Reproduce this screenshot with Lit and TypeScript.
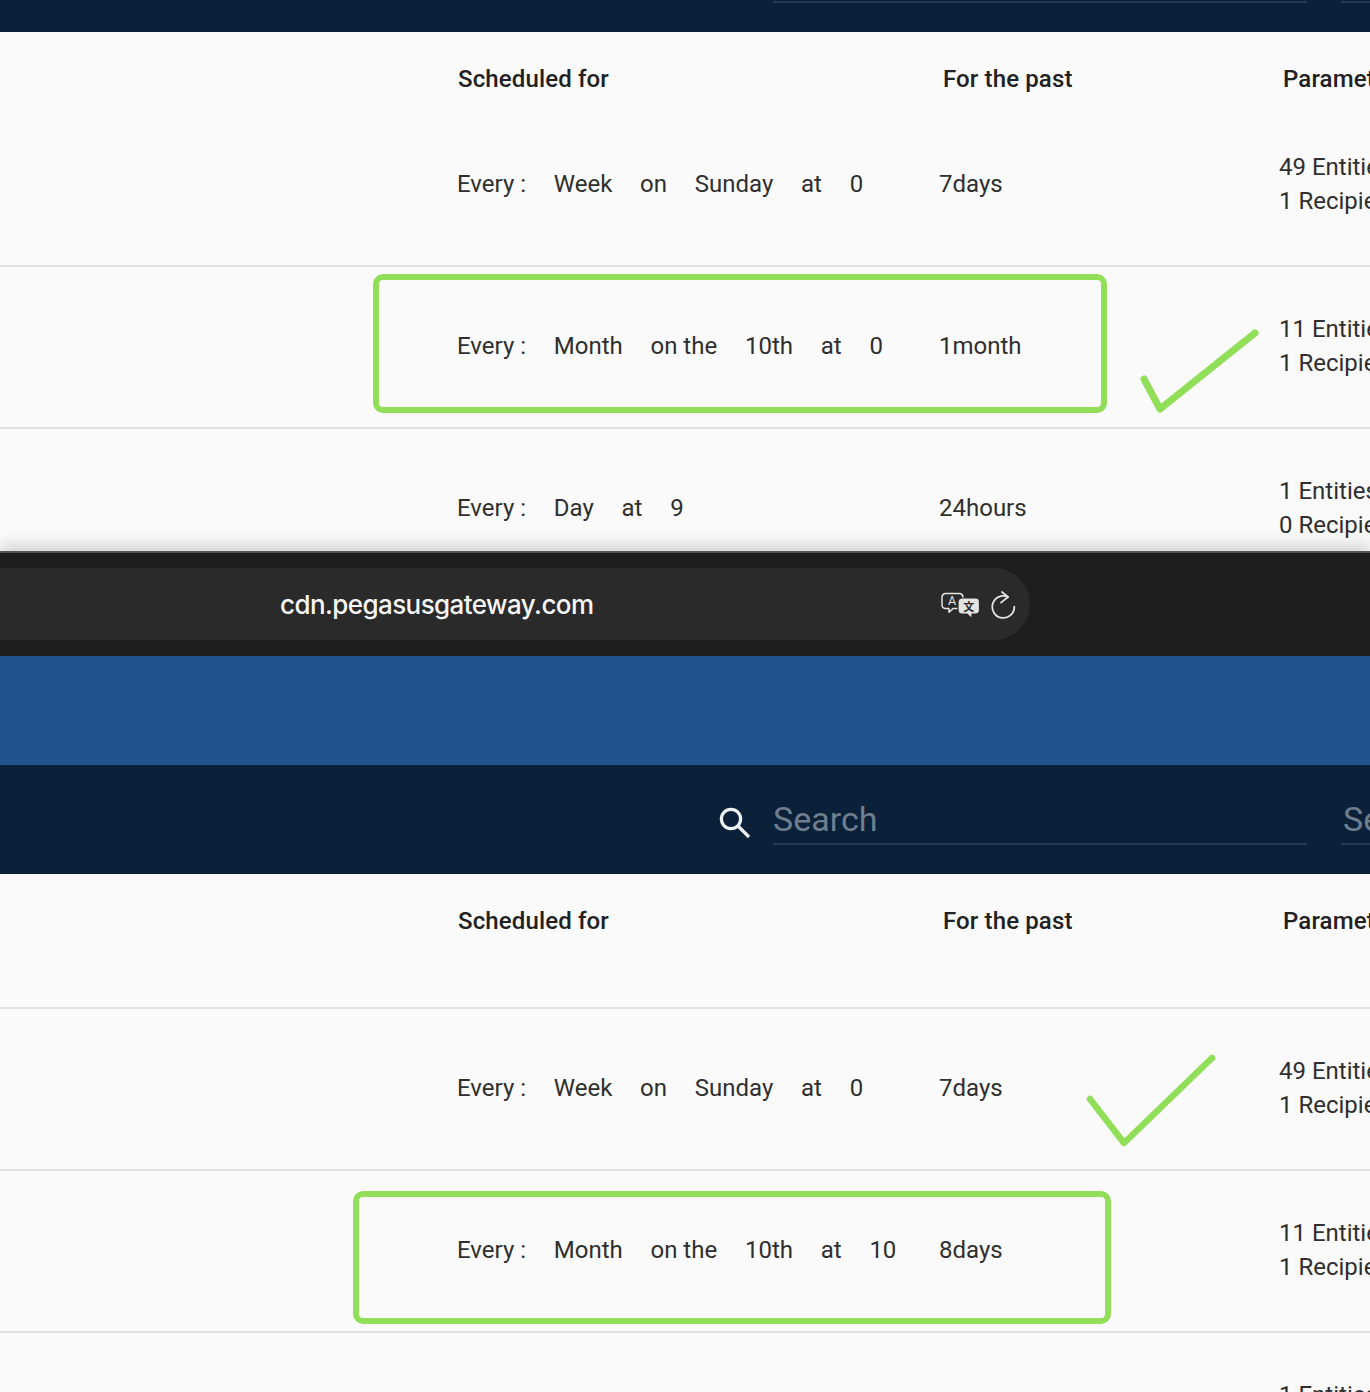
import { LitElement, html, css } from "lit";
import { customElement } from "lit/decorators.js";

type Row = { sched: string[]; past: string; params: string[] };

const TOP_ROWS: Row[] = [
  { sched: ["Every :", "Week", "on", "Sunday", "at", "0"], past: "7days", params: ["49 Entities", "1 Recipient"] },
  { sched: ["Every :", "Month", "on the", "10th", "at", "0"], past: "1month", params: ["11 Entities", "1 Recipient"] },
  { sched: ["Every :", "Day", "at", "9"], past: "24hours", params: ["1 Entities", "0 Recipients"] },
];
const BOTTOM_ROWS: Row[] = [
  { sched: ["Every :", "Week", "on", "Sunday", "at", "0"], past: "7days", params: ["49 Entities", "1 Recipient"] },
  { sched: ["Every :", "Month", "on the", "10th", "at", "10"], past: "8days", params: ["11 Entities", "1 Recipient"] },
  { sched: ["Every :", "Day", "at", "9"], past: "24hours", params: ["1 Entities", "0 Recipients"] },
];

@customElement("app-root")
export class AppRoot extends LitElement {
  static styles = css`
    :host {
      display: block;
      position: relative;
      width: 1370px;
      height: 1392px;
      overflow: hidden;
      background: #fafafa;
      font-family: Roboto, "Liberation Sans", sans-serif;
      color: #2f2f2f;
    }
    .strip {
      height: 31px;
      padding: 1px 0 0 773px;
      display: flex;
      gap: 34px;
      background: #0b2139;
    }
    .rule {
      flex: 0 0 534px;
      height: 2px;
      background: #24384f;
    }
    .panel-top {
      height: 519px;
      overflow: hidden;
    }
    .panel-bottom {
      height: 518px;
      overflow: hidden;
    }
    .grid {
      display: grid;
      grid-template-columns: 482px 340px 1fr;
      padding-left: 457px;
      white-space: nowrap;
    }
    .head {
      font-size: 24px;
      font-weight: 500;
      letter-spacing: 0.13px;
      color: #212121;
      line-height: 30px;
      padding-top: 32px;
      align-items: start;
    }
    .head span:first-child { padding-left: 1px; }
    .head span:not(:first-child) { padding-left: 4px; }
    .panel-top .head { height: 41px; }
    .panel-bottom .head {
      height: 101px;
      border-bottom: 2px solid #e2e2e2;
    }
    .row {
      height: 158px;
      padding-bottom: 2px;
      align-items: center;
      font-size: 24px;
      line-height: 34px;
      border-bottom: 2px solid #e2e2e2;
    }
    .sched {
      display: flex;
      gap: 27.75px;
    }
    .params {
      display: flex;
      flex-direction: column;
    }
    .chrome {
      position: relative;
      height: 105px;
      padding-top: 15px;
      box-sizing: border-box;
      background: #1e1e1e;
      border-top: 2px solid #555;
      box-shadow: 0 -6px 14px rgba(0, 0, 0, 0.16);
    }
    .url {
      width: 1030px;
      height: 72px;
      box-sizing: border-box;
      padding-right: 14px;
      background: #2a2a2a;
      border-radius: 0 36px 36px 0;
      display: flex;
      align-items: center;
      position: relative;
    }
    .url-text {
      position: absolute;
      left: 280px;
      color: #f7f7f7;
      font-family: Inter, "Liberation Sans", sans-serif;
      font-size: 26px;
      font-weight: 500;
      letter-spacing: -0.58px;
      white-space: nowrap;
    }
    .url-icons {
      margin-left: auto;
      display: flex;
      align-items: center;
      gap: 10px;
    }
    .translate { margin-top: 3px; }
    .blue {
      height: 109px;
      background: #21538f;
    }
    .nav {
      height: 109px;
      box-sizing: border-box;
      background: #0b2139;
      padding-left: 718px;
      display: flex;
      align-items: flex-start;
    }
    .nav svg {
      flex: none;
      margin: 41px 21px 0 0;
    }
    .field {
      flex: 0 0 534px;
      height: 80px;
      box-sizing: border-box;
      border-bottom: 2px solid #24384f;
      color: #6e7e8e;
      font-size: 34px;
      line-height: 40px;
      padding-top: 34px;
      margin-right: 34px;
      white-space: nowrap;
    }
    .field + .field { padding-left: 2px; }
    .mark {
      position: absolute;
      box-sizing: border-box;
      border: 6px solid #91de58;
      border-radius: 10px;
    }
    .mark.one { left: 373px; top: 274px; width: 734px; height: 139px; }
    .mark.two { left: 353px; top: 1191px; width: 758px; height: 133px; }
    .tick {
      position: absolute;
      left: 0;
      top: 0;
      pointer-events: none;
    }
  `;

  private renderRow(r: Row) {
    return html`<div class="grid row">
      <div class="sched">${r.sched.map((s) => html`<span>${s}</span>`)}</div>
      <div>${r.past}</div>
      <div class="params">${r.params.map((p) => html`<span>${p}</span>`)}</div>
    </div>`;
  }

  private renderHead() {
    return html`<div class="grid head">
      <span>Scheduled for</span><span>For the past</span><span>Parameters</span>
    </div>`;
  }

  render() {
    return html`
      <div class="strip"><div class="rule"></div><div class="rule"></div></div>
      <div class="panel-top">
        ${this.renderHead()} ${TOP_ROWS.map((r) => this.renderRow(r))}
      </div>
      <div class="chrome">
        <div class="url">
          <span class="url-text">cdn.pegasusgateway.com</span>
          <div class="url-icons">
            <svg class="translate" width="39" height="27" viewBox="0 0 39 27" fill="none">
              <path d="M4.5 1.6h14a3.5 3.5 0 0 1 3.5 3.5v8a3.5 3.5 0 0 1-3.5 3.5H12l-4 3.6v-3.6H4.5A3.5 3.5 0 0 1 1 13.1v-8a3.5 3.5 0 0 1 3.5-3.5z" stroke="#e4e4e4" stroke-width="1.5" stroke-linejoin="round"/>
              <text x="7" y="13" font-family="Roboto, sans-serif" font-size="12.5" fill="#e4e4e4">A</text>
              <path d="M21 6h13.5a4 4 0 0 1 4 4v8a4 4 0 0 1-4 4H31v4.6L26 22h-5a4 4 0 0 1-4-4v-8a4 4 0 0 1 4-4z" fill="#e4e4e4" stroke="#2a2a2a" stroke-width="1.2"/>
              <text x="22.2" y="18.6" font-family="'Noto Sans CJK SC', sans-serif" font-size="11" font-weight="700" fill="#2a2a2a">文</text>
            </svg>
            <svg width="26" height="30" viewBox="0 0 26 30" fill="none" stroke="#e4e4e4" stroke-width="1.8" stroke-linecap="round" stroke-linejoin="round">
              <path d="M18 8A11 11 0 1 0 24.3 17.7"/>
              <path d="M12 3l6 5-7 5.6"/>
            </svg>
          </div>
        </div>
      </div>
      <div class="blue"></div>
      <div class="nav">
        <svg width="34" height="34" viewBox="0 0 34 34" fill="none" stroke="#eef1f4" stroke-width="3.2">
          <circle cx="13" cy="13" r="9.6"/>
          <path d="M20 20l11 11"/>
        </svg>
        <div class="field">Search</div>
        <div class="field">Search</div>
      </div>
      <div class="panel-bottom">
        ${this.renderHead()} ${BOTTOM_ROWS.map((r) => this.renderRow(r))}
      </div>
      <div class="mark one"></div>
      <div class="mark two"></div>
      <svg class="tick" width="1370" height="1392" fill="none" stroke="#91de58" stroke-linecap="round" stroke-linejoin="round">
        <polyline points="1144,379 1160,409 1255,333" stroke-width="7"/>
        <polyline points="1090,1099 1124,1143 1212,1058" stroke-width="6.5"/>
      </svg>
    `;
  }
}
